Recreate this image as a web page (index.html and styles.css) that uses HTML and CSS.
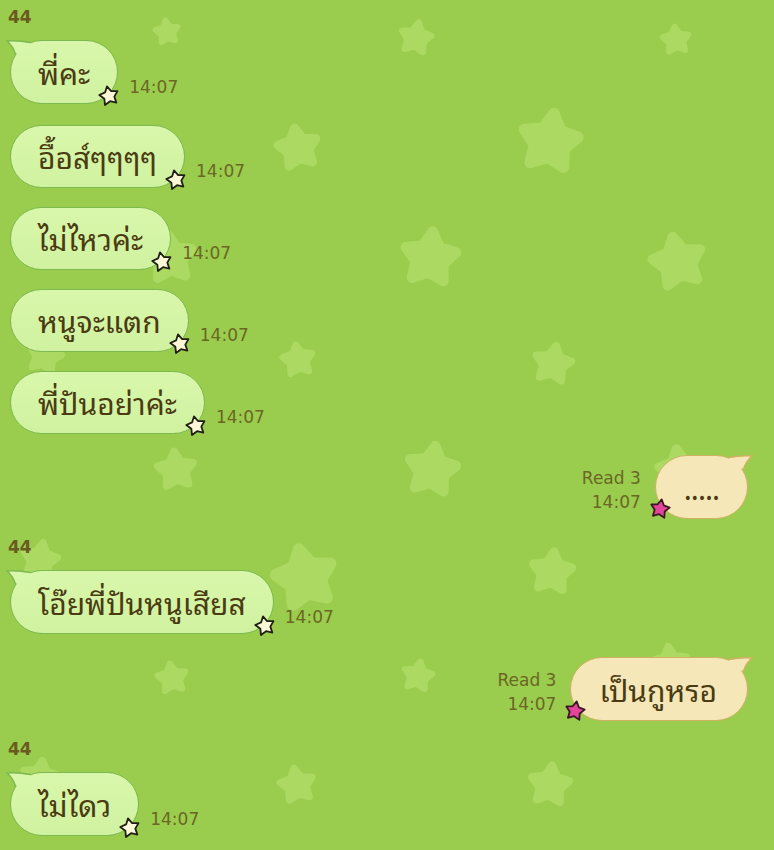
FILE: index.html
```html
<!DOCTYPE html>
<html lang="th">
<head>
<meta charset="utf-8">
<title>Chat</title>
<link rel="stylesheet" href="styles.css">
</head>
<body>
<div class="chat">
  <svg class="bg" width="774" height="850" viewBox="0 0 774 850" aria-hidden="true">
    <defs>
      <path id="st" d="M12 2.2 L15.1 7.7 L21.3 9 L17.1 13.7 L17.8 19.9 L12 17.3 L6.2 19.9 L6.9 13.7 L2.7 9 L8.9 7.7 Z"/>
    </defs>
    <g class="bgstars">
      <use href="#st" transform="translate(167 32) rotate(-8) scale(1.25) translate(-12 -12)"/>
      <use href="#st" transform="translate(416 38) rotate(10) scale(1.6) translate(-12 -12)"/>
      <use href="#st" transform="translate(676 40) rotate(-6) scale(1.4) translate(-12 -12)"/>
      <use href="#st" transform="translate(40 150) rotate(12) scale(1.8) translate(-12 -12)"/>
      <use href="#st" transform="translate(298 148) rotate(-10) scale(2.1) translate(-12 -12)"/>
      <use href="#st" transform="translate(550 142) rotate(8) scale(2.9) translate(-12 -12)"/>
      <use href="#st" transform="translate(170 258) rotate(-5) scale(2.4) translate(-12 -12)"/>
      <use href="#st" transform="translate(430 258) rotate(6) scale(2.7) translate(-12 -12)"/>
      <use href="#st" transform="translate(678 262) rotate(-12) scale(2.6) translate(-12 -12)"/>
      <use href="#st" transform="translate(45 356) rotate(14) scale(1.7) translate(-12 -12)"/>
      <use href="#st" transform="translate(298 360) rotate(-8) scale(1.6) translate(-12 -12)"/>
      <use href="#st" transform="translate(553 364) rotate(10) scale(1.9) translate(-12 -12)"/>
      <use href="#st" transform="translate(176 470) rotate(-6) scale(1.9) translate(-12 -12)"/>
      <use href="#st" transform="translate(432 470) rotate(8) scale(2.5) translate(-12 -12)"/>
      <use href="#st" transform="translate(680 470) rotate(-10) scale(2.2) translate(-12 -12)"/>
      <use href="#st" transform="translate(40 560) rotate(10) scale(1.8) translate(-12 -12)"/>
      <use href="#st" transform="translate(305 578) rotate(-12) scale(3) translate(-12 -12)"/>
      <use href="#st" transform="translate(552 572) rotate(6) scale(2.1) translate(-12 -12)"/>
      <use href="#st" transform="translate(172 678) rotate(-8) scale(1.5) translate(-12 -12)"/>
      <use href="#st" transform="translate(418 676) rotate(10) scale(1.5) translate(-12 -12)"/>
      <use href="#st" transform="translate(670 664) rotate(-6) scale(1.8) translate(-12 -12)"/>
      <use href="#st" transform="translate(40 778) rotate(8) scale(1.8) translate(-12 -12)"/>
      <use href="#st" transform="translate(297 785) rotate(-10) scale(1.75) translate(-12 -12)"/>
      <use href="#st" transform="translate(550 785) rotate(6) scale(2) translate(-12 -12)"/>
    </g>
  </svg>

  <div class="name first">44</div>
  <div class="row in first">
    <div class="bubble">พี่คะ<svg class="tail" width="30" height="30" viewBox="0 0 30 30"><path class="tf" d="M20 3 Q8 0.3 -3 1 Q3 6 5.6 14 L12 12 L20 8 Z"/><path class="ts" d="M20.5 2.6 Q8 0.3 -3 1 Q3 6 5.6 14.5"/></svg><svg class="badge" width="24" height="24" viewBox="0 0 24 24"><use href="#st"/></svg></div>
    <span class="time">14:07</span>
  </div>
  <div class="row in">
    <div class="bubble">อื้อส์ๆๆๆๆ<svg class="badge" width="24" height="24" viewBox="0 0 24 24"><use href="#st"/></svg></div>
    <span class="time">14:07</span>
  </div>
  <div class="row in">
    <div class="bubble">ไม่ไหวค่ะ<svg class="badge" width="24" height="24" viewBox="0 0 24 24"><use href="#st"/></svg></div>
    <span class="time">14:07</span>
  </div>
  <div class="row in">
    <div class="bubble">หนูจะแตก<svg class="badge" width="24" height="24" viewBox="0 0 24 24"><use href="#st"/></svg></div>
    <span class="time">14:07</span>
  </div>
  <div class="row in">
    <div class="bubble">พี่ปันอย่าค่ะ<svg class="badge" width="24" height="24" viewBox="0 0 24 24"><use href="#st"/></svg></div>
    <span class="time">14:07</span>
  </div>

  <div class="row out">
    <div class="meta"><span>Read 3</span><span>14:07</span></div>
    <div class="bubble dots">.....<svg class="tail" width="30" height="30" viewBox="0 0 30 30"><path class="tf" d="M20 3 Q8 0.3 -3 1 Q3 6 5.6 14 L12 12 L20 8 Z"/><path class="ts" d="M20.5 2.6 Q8 0.3 -3 1 Q3 6 5.6 14.5"/></svg><svg class="badge" width="24" height="24" viewBox="0 0 24 24"><use href="#st"/></svg></div>
  </div>

  <div class="name">44</div>
  <div class="row in first">
    <div class="bubble">โอ๊ยพี่ปันหนูเสียส<svg class="tail" width="30" height="30" viewBox="0 0 30 30"><path class="tf" d="M20 3 Q8 0.3 -3 1 Q3 6 5.6 14 L12 12 L20 8 Z"/><path class="ts" d="M20.5 2.6 Q8 0.3 -3 1 Q3 6 5.6 14.5"/></svg><svg class="badge" width="24" height="24" viewBox="0 0 24 24"><use href="#st"/></svg></div>
    <span class="time">14:07</span>
  </div>

  <div class="row out gap">
    <div class="meta"><span>Read 3</span><span>14:07</span></div>
    <div class="bubble">เป็นกูหรอ<svg class="tail" width="30" height="30" viewBox="0 0 30 30"><path class="tf" d="M20 3 Q8 0.3 -3 1 Q3 6 5.6 14 L12 12 L20 8 Z"/><path class="ts" d="M20.5 2.6 Q8 0.3 -3 1 Q3 6 5.6 14.5"/></svg><svg class="badge" width="24" height="24" viewBox="0 0 24 24"><use href="#st"/></svg></div>
  </div>

  <div class="name">44</div>
  <div class="row in first">
    <div class="bubble">ไม่ไดว<svg class="tail" width="30" height="30" viewBox="0 0 30 30"><path class="tf" d="M20 3 Q8 0.3 -3 1 Q3 6 5.6 14 L12 12 L20 8 Z"/><path class="ts" d="M20.5 2.6 Q8 0.3 -3 1 Q3 6 5.6 14.5"/></svg><svg class="badge" width="24" height="24" viewBox="0 0 24 24"><use href="#st"/></svg></div>
    <span class="time">14:07</span>
  </div>
</div>
</body>
</html>
```

FILE: styles.css
```css
html, body {
  margin: 0;
  padding: 0;
}
body {
  width: 774px;
  height: 850px;
  overflow: hidden;
  background: #9acd4e;
  font-family: "Noto Sans Thai Looped", "Loma", "Garuda", "Noto Sans Thai", "Noto Sans", "DejaVu Sans", sans-serif;
}
.chat {
  position: relative;
  width: 774px;
  height: 850px;
  box-sizing: border-box;
  padding: 8px 26px 0 10px;
  display: flex;
  flex-direction: column;
}
.bg {
  position: absolute;
  left: 0;
  top: 0;
  z-index: 0;
}
.bgstars use {
  fill: #acd962;
  stroke: #acd962;
  stroke-width: 4;
  stroke-linejoin: round;
}
.name {
  position: relative;
  z-index: 1;
  margin: 19px 0 0 -2px;
  height: 18px;
  line-height: 18px;
  font-family: "DejaVu Sans", sans-serif;
  font-weight: bold;
  font-size: 17px;
  color: #6b5a1f;
}
.name.first {
  margin-top: 0;
}
.row {
  position: relative;
  z-index: 1;
  display: flex;
  align-items: flex-end;
  gap: 11px;
  margin-top: 19px;
}
.name + .row {
  margin-top: 14px;
}
.row.first + .row.in {
  margin-top: 21px;
}
.row.out {
  justify-content: flex-end;
  gap: 14px;
  margin-top: 21px;
}
.row.out.gap {
  margin-top: 23px;
}
.bubble {
  position: relative;
  box-sizing: border-box;
  height: 63px;
  padding: 0 27px 2px 27px;
  display: flex;
  align-items: center;
  border-radius: 32px;
  font-size: 30px;
  font-weight: 400;
  color: #4a3b12;
  white-space: nowrap;
}
.row.in .bubble {
  background: linear-gradient(#d9f7ab, #d0f2a0);
  border: 1.5px solid #7cb94e;
}
.row.first .bubble,
.row.out .bubble {
  height: 64px;
}
.row.out .bubble {
  background: #f5e7b8;
  border: 1.5px solid #d0b164;
  padding: 0 30px 2px 28px;
}
.row.out .bubble.dots {
  padding: 0 28px 2px 28px;
  letter-spacing: -1px;
}
.tail {
  position: absolute;
  left: -1.5px;
  top: -1.5px;
  overflow: visible;
}
.row.out .tail {
  left: auto;
  right: -1.5px;
  transform: scaleX(-1);
}
.tail .tf {
  fill: #d9f7ab;
}
.tail .ts {
  fill: none;
  stroke: #7cb94e;
  stroke-width: 1.5;
}
.row.out .tail .tf {
  fill: #f5e7b8;
}
.row.out .tail .ts {
  stroke: #d0b164;
}
.badge {
  position: absolute;
  right: -4px;
  bottom: -5px;
  overflow: visible;
  transform: rotate(-12deg);
}
.badge use {
  fill: #fcf7d6;
  stroke: #1f1f14;
  stroke-width: 1.8;
  stroke-linejoin: round;
}
.row.out .badge {
  right: auto;
  left: -8px;
  bottom: -3px;
  transform: rotate(10deg);
}
.row.out .badge use {
  fill: #e2459b;
  stroke: #3a1a22;
}
.time {
  margin-bottom: 7px;
  line-height: 20px;
  font-family: "DejaVu Sans", sans-serif;
  font-size: 17px;
  color: #6b6624;
}
.meta {
  display: flex;
  flex-direction: column;
  align-items: flex-end;
  margin-bottom: 5px;
  line-height: 24px;
  font-family: "DejaVu Sans", sans-serif;
  font-size: 17px;
  color: #6b6624;
}
```
